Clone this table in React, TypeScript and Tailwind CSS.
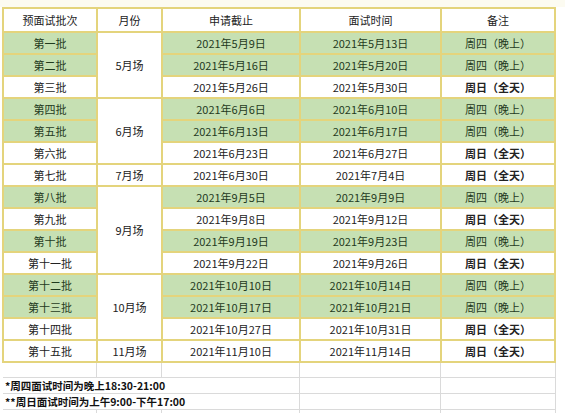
import React from "react";

type Row = { batch: string; apply: string; interview: string; green: boolean };

const rows: Row[] = [
  { batch: "第一批", apply: "2021年5月9日", interview: "2021年5月13日", green: true },
  { batch: "第二批", apply: "2021年5月16日", interview: "2021年5月20日", green: true },
  { batch: "第三批", apply: "2021年5月26日", interview: "2021年5月30日", green: false },
  { batch: "第四批", apply: "2021年6月6日", interview: "2021年6月10日", green: true },
  { batch: "第五批", apply: "2021年6月13日", interview: "2021年6月17日", green: true },
  { batch: "第六批", apply: "2021年6月23日", interview: "2021年6月27日", green: false },
  { batch: "第七批", apply: "2021年6月30日", interview: "2021年7月4日", green: false },
  { batch: "第八批", apply: "2021年9月5日", interview: "2021年9月9日", green: true },
  { batch: "第九批", apply: "2021年9月8日", interview: "2021年9月12日", green: false },
  { batch: "第十批", apply: "2021年9月19日", interview: "2021年9月23日", green: true },
  { batch: "第十一批", apply: "2021年9月22日", interview: "2021年9月26日", green: false },
  { batch: "第十二批", apply: "2021年10月10日", interview: "2021年10月14日", green: true },
  { batch: "第十三批", apply: "2021年10月17日", interview: "2021年10月21日", green: true },
  { batch: "第十四批", apply: "2021年10月27日", interview: "2021年10月31日", green: false },
  { batch: "第十五批", apply: "2021年11月10日", interview: "2021年11月14日", green: false },
];

// month label shown on the first row of each merged block
const months: Record<number, { label: string; span: string }> = {
  0: { label: "5月场", span: "row-span-3" },
  3: { label: "6月场", span: "row-span-3" },
  6: { label: "7月场", span: "row-span-1" },
  7: { label: "9月场", span: "row-span-4" },
  11: { label: "10月场", span: "row-span-3" },
  14: { label: "11月场", span: "row-span-1" },
};

const cell = "flex items-center justify-center whitespace-nowrap";

export default function App() {
  return (
    <div
      className="w-[565px] h-[413px] overflow-hidden bg-white text-[11px] text-[#222]"
      style={{ fontFamily: '"Noto Sans CJK SC", "Noto Sans", sans-serif' }}
    >
      <div className="h-[7px] bg-[#fcfbf1]" />
      <div className="pl-[2px]">
        <div className="grid w-max grid-cols-[92px_63px_136px_139px_112px] grid-rows-[22px_repeat(15,20px)] gap-[2px] bg-[#e4d47c] p-[2px]">
          <div className={`${cell} bg-white`}>预面试批次</div>
          <div className={`${cell} bg-white`}>月份</div>
          <div className={`${cell} bg-white`}>申请截止</div>
          <div className={`${cell} bg-white`}>面试时间</div>
          <div className={`${cell} bg-white`}>备注</div>
          {rows.map((r, i) => {
            const bg = r.green ? "bg-[#c6e0b3] text-[#1f3a1d]" : "bg-white";
            const m = months[i];
            return (
              <React.Fragment key={r.batch}>
                <div className={`${cell} ${bg}`}>{r.batch}</div>
                {m && <div className={`${cell} ${m.span} bg-white`}>{m.label}</div>}
                <div className={`${cell} ${bg}`}>{r.apply}</div>
                <div className={`${cell} ${bg}`}>{r.interview}</div>
                <div className={`${cell} ${bg} ${r.green ? "" : "font-bold"}`}>
                  {r.green ? "周四（晚上）" : "周日（全天）"}
                </div>
              </React.Fragment>
            );
          })}
        </div>
      </div>
      <div className="pl-[3px]">
        <div className="grid w-max grid-cols-[94px_65px_138px_141px_114px] grid-rows-[15px_16px_16px_16px] border-r border-[#dadada]">
          <div className="border-r border-b border-[#dadada]" />
          <div className="border-r border-b border-[#dadada]" />
          <div className="border-r border-b border-[#dadada]" />
          <div className="border-r border-b border-[#dadada]" />
          <div className="border-b border-[#dadada]" />
          <div className="col-span-3 flex items-center whitespace-nowrap border-r border-b border-[#dadada] pl-[2px] text-[10.5px] font-bold text-[#111]">
            *周四面试时间为晚上18:30-21:00
          </div>
          <div className="border-r border-b border-[#dadada]" />
          <div className="border-b border-[#dadada]" />
          <div className="col-span-3 flex items-center whitespace-nowrap border-r border-b border-[#dadada] pl-[2px] text-[10.5px] font-bold text-[#111]">
            **周日面试时间为上午9:00-下午17:00
          </div>
          <div className="border-r border-b border-[#dadada]" />
          <div className="border-b border-[#dadada]" />
          <div className="border-r border-[#dadada]" />
          <div className="border-r border-[#dadada]" />
          <div className="border-r border-[#dadada]" />
          <div className="border-r border-[#dadada]" />
          <div />
        </div>
      </div>
    </div>
  );
}
